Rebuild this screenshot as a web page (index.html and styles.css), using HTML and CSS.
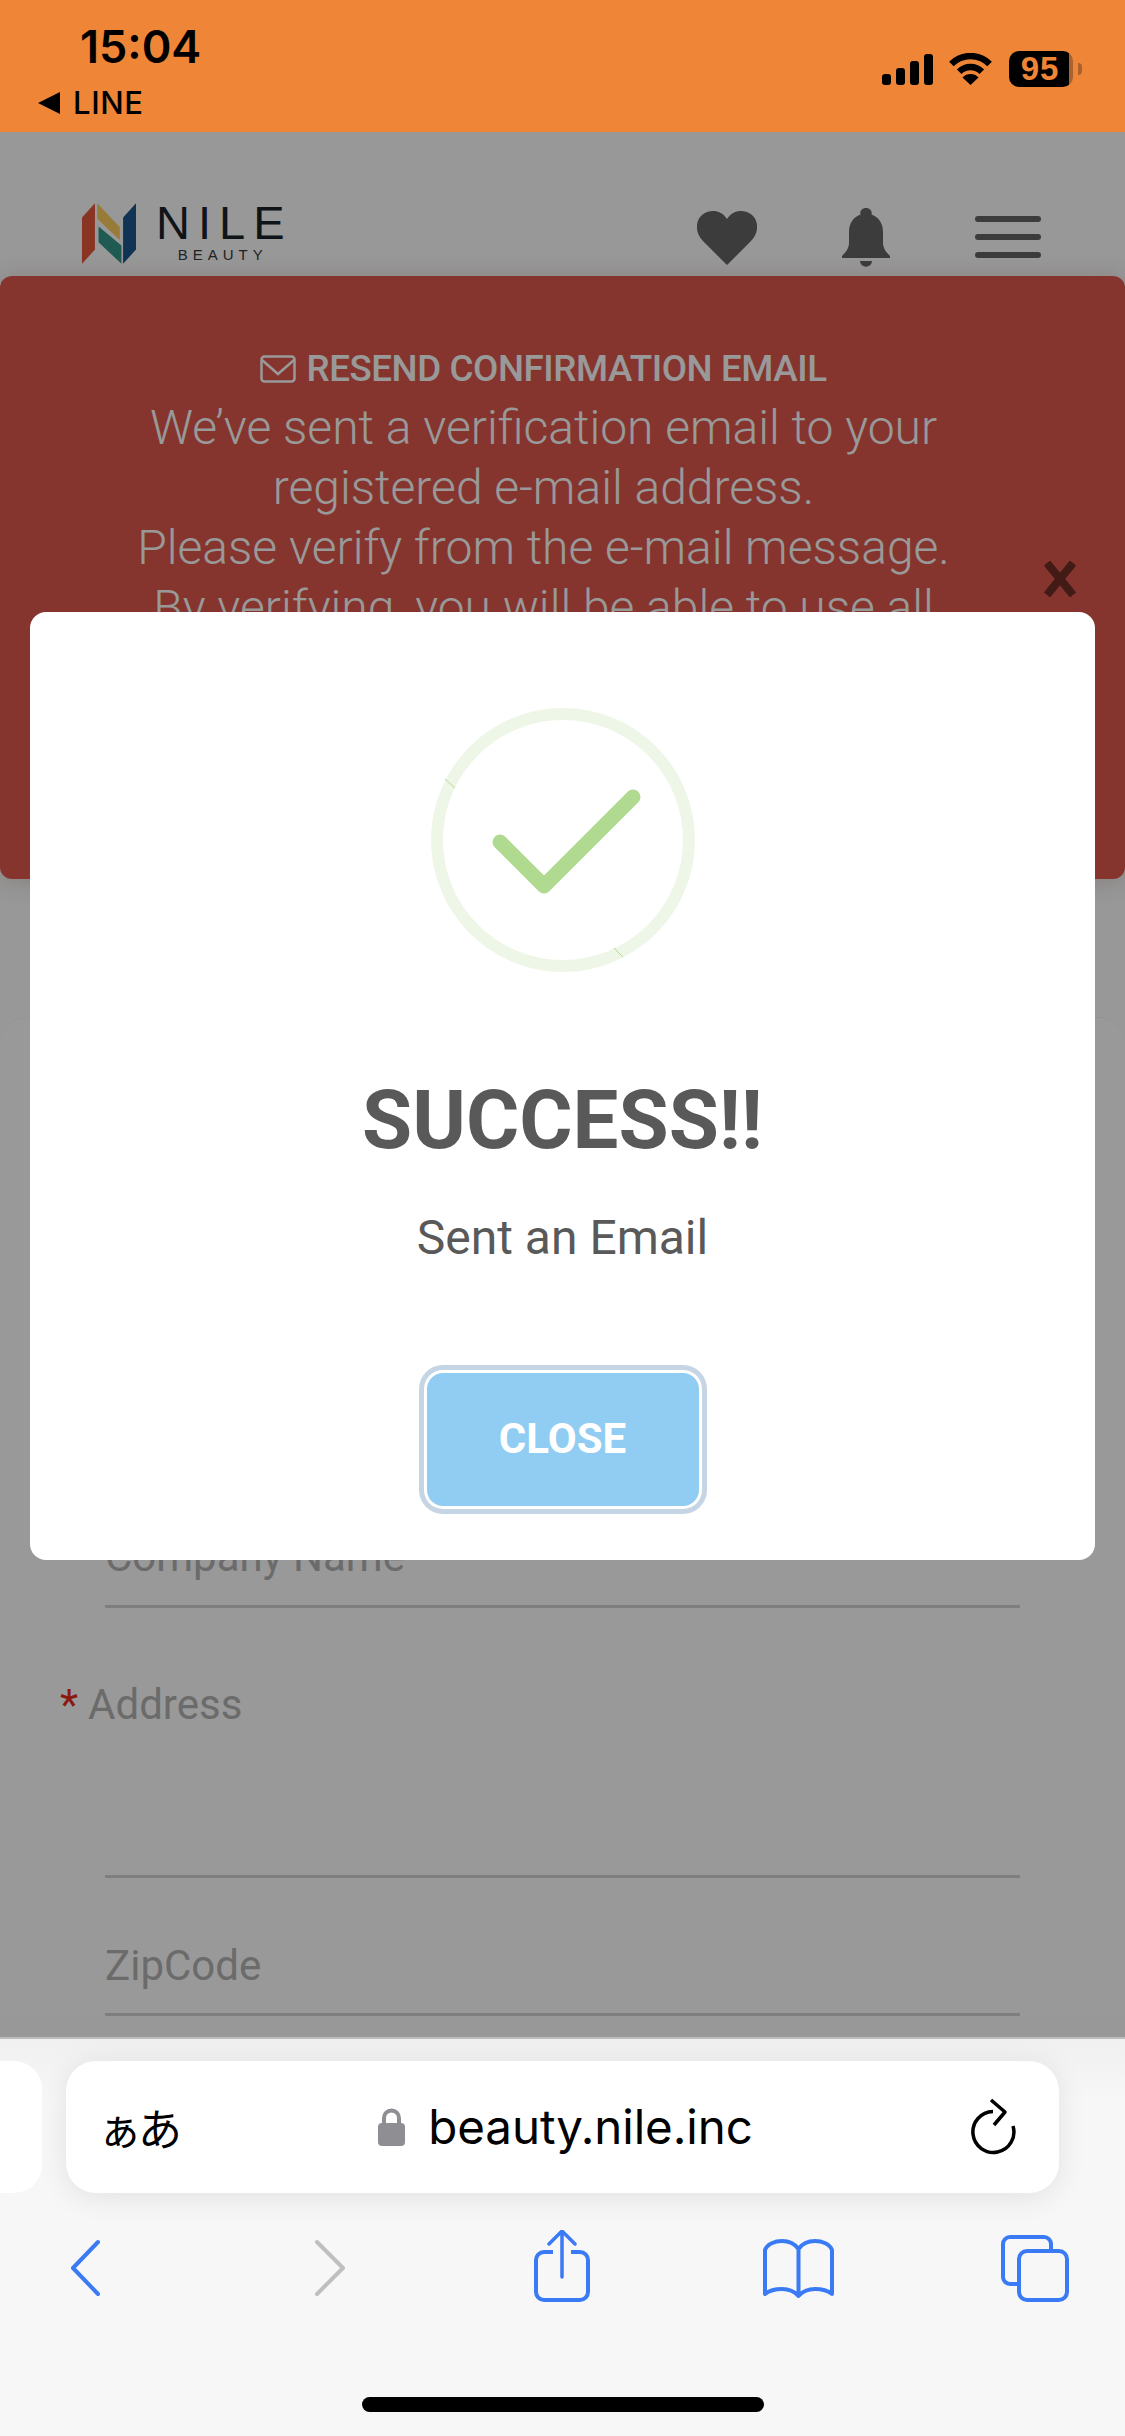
FILE: index.html
```html
<!DOCTYPE html>
<html lang="en">
<head>
<meta charset="utf-8">
<title>Nile Beauty</title>
<link rel="stylesheet" href="styles.css">
</head>
<body>
<div class="phone">
  <div class="status">
    <div class="status-left">
      <div class="time">15:04</div>
      <div class="back-app"><span class="tri"></span><span>LINE</span></div>
    </div>
    <div class="status-right">
      <div class="signal"><i class="s1"></i><i class="s2"></i><i class="s3"></i><i class="s4"></i></div>
      <svg class="wifi" width="45" height="32" viewBox="0 0 45 32"><path d="M3.4 11A27 27 0 0 1 41.6 11M11.2 18.7A16 16 0 0 1 33.8 18.7" fill="none" stroke="#000" stroke-width="6.5"/><path d="M22.5 32L14.5 24.5A11 11 0 0 1 30.5 24.5Z" fill="#000"/></svg>
      <div class="battery"><span>95</span></div>
      <div class="nub"></div>
    </div>
  </div>

  <div class="main">
    <div class="page">
      <header class="header">
        <div class="logo">
          <svg class="logo-mark" width="54" height="62" viewBox="0 0 163 186"><path d="M0 43L39 0V140L0 183Z" fill="#e6573c"/><path d="M46 0L114 72V111L46 47Z" fill="#ffcd60"/><path d="M50 70L119 128V183L50 118Z" fill="#34968a"/><path d="M124 43L163 0V140L124 183Z" fill="#1d578e"/></svg>
          <div class="logo-text"><div class="logo-name">NILE</div><div class="logo-sub">BEAUTY</div></div>
        </div>
        <div class="header-icons">
          <svg width="60" height="55" viewBox="0 0 60 55"><path d="M30 55L6 31C-2 23-2 11 5 5C12-1 24-1 30 9C36-1 48-1 55 5C62 11 62 23 54 31Z" fill="#646464"/></svg>
          <svg width="48" height="59" viewBox="0 0 48 59"><path d="M24 0C28 0 30.500 3 29.500 6.500C37 9 41 16 41 24V35C41 40 44 44 48 48V50H0V48C4 44 7 40 7 35V24C7 16 11 9 18.500 6.500C17.500 3 20 0 24 0Z" fill="#646464"/><path d="M18 53H30C29.500 60.500 18.500 60.500 18 53Z" fill="#646464"/></svg>
          <div class="menu"><i></i><i></i><i></i></div>
        </div>
      </header>

      <section class="banner">
        <div class="banner-title">
          <svg class="mail" width="36" height="28" viewBox="0 0 36 28"><rect x="1.500" y="1.500" width="33" height="25" rx="3" fill="none" stroke="#fff" stroke-width="2.500"/><path d="M2 5L18 19L34 5" fill="none" stroke="#fff" stroke-width="2.500"/></svg>
          <span>RESEND CONFIRMATION EMAIL</span>
        </div>
        <p class="banner-text">We’ve sent a verification email to your<br>registered e-mail address.<br>Please verify from the e-mail message.<br>By verifying, you will be able to use all<br>the features of this service.</p>
        <svg class="banner-close" width="32" height="36" viewBox="0 0 32 36"><path d="M3 2L29 34M29 2L3 34" stroke="#6e2d26" stroke-width="8"/></svg>
      </section>

      <section class="card">
        <div class="field company">Company Name</div>
        <div class="label"><span class="req">*</span>Address</div>
        <div class="field area"></div>
        <div class="field zip">ZipCode</div>
      </section>
    </div>

    <div class="overlay">
      <div class="modal">
        <div class="success-icon">
          <svg width="264" height="264" viewBox="0 0 264 264">
            <circle cx="132" cy="132" r="126" fill="none" stroke="#eef6e8" stroke-width="12"/>
            <path d="M14 71L24 80M183 240L192 249" stroke="#b2da92" stroke-width="1"/>
            <path d="M69 134L113 178L202 89" fill="none" stroke="#b1da91" stroke-width="15" stroke-linecap="round" stroke-linejoin="round"/>
          </svg>
        </div>
        <h2 class="modal-title">SUCCESS!!</h2>
        <div class="modal-text">Sent an Email</div>
        <button class="modal-btn" type="button">CLOSE</button>
      </div>
    </div>
  </div>

  <div class="safari">
    <div class="tabs">
      <div class="prev-tab"></div>
      <div class="url-bar">
        <span class="aa">ぁあ</span>
        <div class="url">
          <svg width="27" height="38" viewBox="0 0 27 38"><path d="M6 17V10A7.500 7.500 0 0 1 21 10V17" fill="none" stroke="#8e8e93" stroke-width="4"/><rect y="15" width="27" height="23" rx="4" fill="#8e8e93"/></svg>
          <span>beauty.nile.inc</span>
        </div>
        <svg width="48" height="58" viewBox="0 0 48 58"><path d="M24 13.500A20.500 20.500 0 1 0 44 28" fill="none" stroke="#000" stroke-width="3.500"/><path d="M22 2L36 14L25 27" fill="none" stroke="#000" stroke-width="3.500" stroke-linejoin="round"/></svg>
      </div>
    </div>
    <div class="toolbar">
      <svg class="t-back" width="32" height="74" viewBox="0 0 32 74"><path d="M28 12L3 38L28 64" fill="none" stroke="#3a7bf5" stroke-width="4" stroke-linecap="round" stroke-linejoin="round"/></svg>
      <svg class="t-fwd" width="32" height="74" viewBox="0 0 32 74"><path d="M3 12L29 38L3 64" fill="none" stroke="#bfbfbf" stroke-width="4" stroke-linecap="round" stroke-linejoin="round"/></svg>
      <svg class="t-share" width="56" height="74" viewBox="0 0 56 74"><path d="M19 22H10A8 8 0 0 0 2 30V62A8 8 0 0 0 10 70H46A8 8 0 0 0 54 62V30A8 8 0 0 0 46 22H37" fill="none" stroke="#3a7bf5" stroke-width="4"/><path d="M28 47V2M15 14L28 1L41 14" fill="none" stroke="#3a7bf5" stroke-width="3.500" stroke-linecap="round" stroke-linejoin="round"/></svg>
      <svg class="t-book" width="71" height="74" viewBox="0 0 71 74"><path d="M2 64V20C4 14 12 11 19 11C26 11 32 14 35.500 19C39 14 45 11 52 11C59 11 67 14 69 20V64C64 60 58 59 52 59C45 59 39 62 35.500 66C32 62 26 59 19 59C13 59 7 60 2 64ZM35.500 19V66" fill="none" stroke="#3a7bf5" stroke-width="4" stroke-linejoin="round"/></svg>
      <svg class="t-tabs" width="68" height="74" viewBox="0 0 68 74"><path d="M16 54H9A7 7 0 0 1 2 47V14A7 7 0 0 1 9 7H43A7 7 0 0 1 50 14V19" fill="none" stroke="#3a7bf5" stroke-width="4"/><rect x="18" y="21" width="48" height="49" rx="8" fill="none" stroke="#3a7bf5" stroke-width="4"/></svg>
    </div>
    <div class="home-row"><div class="home"></div></div>
  </div>
</div>
</body>
</html>
```

FILE: styles.css
```css
* { box-sizing: border-box; }
html, body { margin: 0; padding: 0; }
body { width: 1125px; height: 2436px; overflow: hidden; font-family: Roboto, "Noto Sans", sans-serif; background: #fff; }
.phone { width: 1125px; height: 2436px; display: flex; flex-direction: column; }

/* status bar */
.status { height: 132px; flex: none; background: #ee8537; display: flex; justify-content: space-between; color: #000; font-family: Inter, "Liberation Sans", sans-serif; }
.status-left { padding: 21px 0 0 38px; }
.time { margin-left: 42px; font-size: 45px; font-weight: 600; line-height: 52px; }
.back-app { margin-top: 12px; display: flex; align-items: center; gap: 13px; font-size: 31px; font-weight: 500; line-height: 36px; letter-spacing: .6px; }
.tri { width: 0; height: 0; border-style: solid; border-width: 11px 22px 11px 0; border-color: transparent #000 transparent transparent; }
.status-right { display: flex; align-items: center; height: 36px; margin: 51px 43px 0 0; }
.signal { display: flex; align-items: flex-end; gap: 5px; height: 31px; }
.signal i { display: block; width: 9px; background: #000; border-radius: 3px; }
.s1 { height: 11px; } .s2 { height: 17px; } .s3 { height: 24px; } .s4 { height: 31px; }
.wifi { margin-left: 15px; }
.battery { width: 64px; height: 36px; margin-left: 16px; border-radius: 10px; background: linear-gradient(90deg, #000 94%, #a9622d 94%); color: #ee8537; display: flex; align-items: center; justify-content: center; padding-right: 2px; font-family: "Liberation Sans", sans-serif; font-size: 33px; font-weight: 700; letter-spacing: 1px; }
.nub { width: 4px; height: 12px; margin-left: 5px; background: #a9622d; border-radius: 0 4px 4px 0; }

/* page under the dialog */
.main { flex: 1; position: relative; overflow: hidden; background: #fdfdfd; }
.header { height: 144px; padding: 66px 84px 0 82px; display: flex; justify-content: space-between; align-items: center; }
.logo { display: flex; gap: 20px; margin-bottom: 6px; }
.logo-mark { flex: none; }
.logo-text { display: flex; flex-direction: column; align-items: center; font-family: "Liberation Sans", sans-serif; }
.logo-name { font-size: 47px; line-height: 40px; letter-spacing: 8px; margin-right: -8px; color: #19222a; font-weight: 400; }
.logo-sub { font-size: 15px; line-height: 20px; letter-spacing: 5px; margin-right: -5px; margin-top: 2px; color: #3a3a3a; }
.header-icons { display: flex; align-items: center; gap: 85px; }
.menu { width: 66px; display: flex; flex-direction: column; gap: 12px; }
.menu i { display: block; height: 6px; border-radius: 3px; background: #646464; }

.banner { position: relative; background: #de584d; border-radius: 12px; padding: 73px 38px 181px 0; text-align: center; color: #fff; box-shadow: 0 2px 24px rgba(120, 60, 50, .22); }
.banner-title { display: flex; justify-content: center; align-items: center; gap: 10px; font-size: 36.7px; font-weight: 500; line-height: 40px; letter-spacing: -.4px; }
.banner-text { margin: 9px 0 0; font-size: 48px; font-weight: 300; line-height: 60px; }
.banner-close { position: absolute; left: 1044px; top: 285px; }

.card { margin-top: 138px; background: #fff; border-top: 1px solid #f6f6f6; border-radius: 26px 26px 0 0; padding-top: 514px; color: #b3b3b3; font-size: 42px; line-height: 50px; }
.field { margin: 0 105px; border-bottom: 3px solid #d4d4d4; padding-bottom: 23px; }
.label { margin: 72px 0 0 60px; display: flex; gap: 10px; }
.req { color: #e62b1e; }
.area { height: 148px; padding: 0; }
.zip { margin-top: 63px; padding-bottom: 22px; }

/* dialog */
.overlay { position: absolute; inset: 0; padding-top: 3px; background: rgba(0, 0, 0, .4); display: flex; align-items: center; justify-content: center; }
.modal { width: 1065px; background: #fff; border-radius: 16px; padding: 96px 0 54px; display: flex; flex-direction: column; align-items: center; color: #595959; }
.success-icon { width: 264px; height: 264px; }
.modal-title { margin: 103px 0 0; font-size: 81.500px; font-weight: 700; line-height: 90px; }
.modal-text { margin-top: 46px; font-size: 48px; line-height: 54px; }
.modal-btn { margin-top: 108px; width: 272px; height: 133px; padding: 0 0 3px; border: 0; border-radius: 16px; background: #91cdf3; color: #fff; font-family: Roboto, sans-serif; font-size: 42px; font-weight: 700; box-shadow: 0 0 0 3px #fff, 0 0 0 8px #c5d5e4; }

/* browser chrome */
.safari { height: 399px; flex: none; background: linear-gradient(#f0f0f0, #f7f7f7 60px); border-top: 2px solid #bcbcbc; padding-top: 22px; }
.tabs { display: flex; gap: 24px; }
.prev-tab { width: 42px; height: 132px; background: #fff; border-radius: 0 28px 28px 0; }
.url-bar { width: 993px; height: 132px; background: #fff; border-radius: 30px; box-shadow: 0 4px 30px rgba(0, 0, 0, .09); display: flex; align-items: center; justify-content: space-between; padding: 0 42px 0 40px; color: #000; font-family: Inter, "Liberation Sans", sans-serif; }
.aa { margin-left: -8px; font-family: "Noto Sans CJK JP", sans-serif; font-size: 44px; line-height: 50px; letter-spacing: -4px; }
.url { display: flex; align-items: center; gap: 23px; margin-right: 16px; font-size: 47.500px; line-height: 54px; letter-spacing: -.1px; }
.toolbar { display: flex; margin-top: 37px; height: 74px; }
.t-back { margin-left: 70px; }
.t-fwd { margin-left: 212px; }
.t-share { margin-left: 188px; }
.t-book { margin-left: 173px; }
.t-tabs { margin-left: 167px; }
.home-row { display: flex; justify-content: center; margin-top: 93px; }
.home { width: 402px; height: 15px; border-radius: 8px; background: #000; }
```
